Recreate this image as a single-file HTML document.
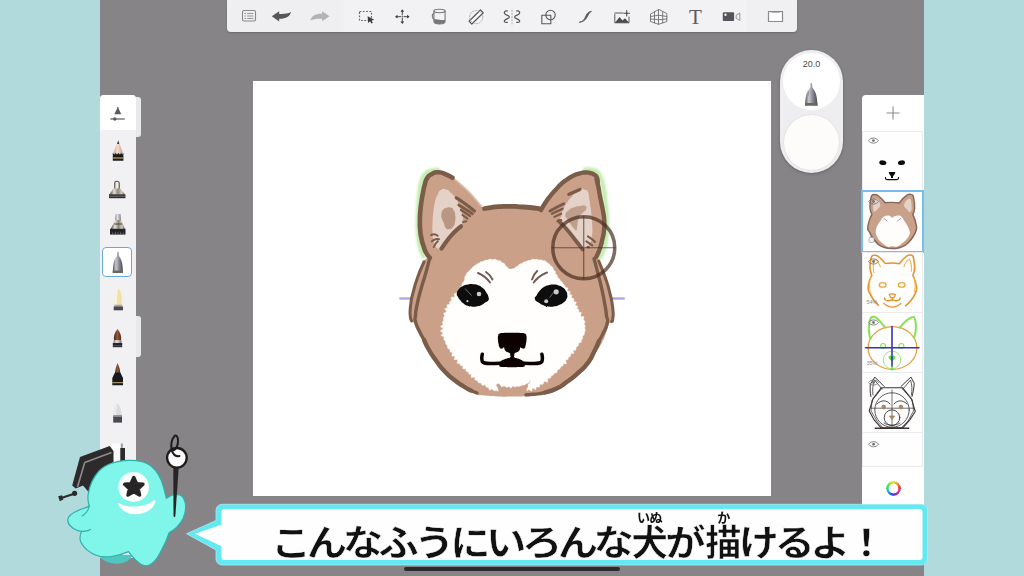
<!DOCTYPE html>
<html lang="ja">
<head>
<meta charset="utf-8">
<title>Sketch tutorial</title>
<style>
html,body{margin:0;padding:0;}
body{width:1024px;height:576px;overflow:hidden;background:#b0dadc;font-family:"Liberation Sans","Noto Sans CJK JP",sans-serif;}
#stage{position:relative;width:1024px;height:576px;overflow:hidden;background:#b0dadc;}
#app{position:absolute;left:100px;top:0;width:824px;height:576px;background:#868487;}
#canvas{position:absolute;left:253px;top:80.5px;width:518px;height:415px;background:#fff;}
#toolbar{position:absolute;left:227px;top:0;width:570px;height:32px;background:linear-gradient(90deg,#efeef0 0,#efeef0 116px,#f2f1f3 117px,#f2f1f3 519px,#f0eff1 520px);border-radius:0 0 4px 4px;box-shadow:0 1px 2px rgba(0,0,0,.22);}
#toolbar .seg{position:absolute;top:0;height:32px;background:#f6f5f7;}
#leftpanel{position:absolute;left:100px;top:95px;width:36px;height:463px;background:#f1f0f3;border-radius:4px 4px 0 0;}
#leftpanel .head{position:absolute;left:0;top:0;width:36px;height:35px;background:#fff;border-radius:4px 4px 0 0;}
.tab{position:absolute;left:136px;width:5px;background:#e9e8eb;border-radius:0 3px 3px 0;}
#sel{position:absolute;left:102px;top:246.500px;width:27.500px;height:28px;border:1.5px solid #6aa9e0;border-radius:4px;background:#fff;}
#rightpanel{position:absolute;left:862px;top:95px;width:62px;height:415px;background:#fff;border-radius:4px 0 0 0;}
.layer{position:absolute;left:863px;width:59px;background:#fefefe;box-shadow:0 0 0 1px #ebeaed;}
#pill{position:absolute;left:780px;top:50px;width:63px;height:123px;border-radius:32px;background:#eeedf0;box-shadow:0 1px 3px rgba(0,0,0,.25);}
#pill .c1{position:absolute;left:3px;top:3px;width:57px;height:57px;border-radius:50%;background:#fff;}
#pill .c2{position:absolute;left:4px;top:65px;width:55px;height:55px;border-radius:50%;background:#fdfcfb;box-shadow:0 0 2px rgba(0,0,0,.12);}
#pill .num{position:absolute;left:0;top:9px;width:63px;text-align:center;font-size:9px;line-height:11px;color:#4a494d;}
#caption{position:absolute;left:217px;top:505px;width:701px;height:53px;border:4px solid #62e3ee;border-radius:5px;background:#fff;box-shadow:0 0 0 1px #b6f3f7;}
#captext{-webkit-text-stroke:.5px #fefefe;position:absolute;left:271px;top:514px;font-size:36px;font-weight:700;color:#111;white-space:nowrap;line-height:60px;letter-spacing:-4.0px;transform:scaleX(1.12);transform-origin:0 0;}
.k{position:relative;display:inline-block;transform:scaleX(.9);letter-spacing:0;margin-right:-4.0px;}
.r{-webkit-text-stroke:0;position:absolute;left:50%;top:-3px;transform:translateX(-50%);font-size:13px;line-height:13px;letter-spacing:-0.5px;white-space:nowrap;}
#homebar{position:absolute;left:404px;top:567px;width:216px;height:4px;border-radius:2px;background:#2a2a2e;}
svg{position:absolute;left:0;top:0;}
#wheel{position:absolute;left:885.5px;top:480.8px;width:15px;height:15px;border-radius:50%;background:conic-gradient(#e8e12a,#f39a1e,#ea3030,#e02db0,#7a2be0,#2b4fe0,#2bb0e0,#2be07a,#8fe02b,#e8e12a);-webkit-mask:radial-gradient(circle,transparent 4.6px,#000 5.2px);mask:radial-gradient(circle,transparent 4.6px,#000 5.2px);}
</style>
</head>
<body>
<div id="stage">
  <div id="app"></div>
  <div id="canvas"></div>
  <div id="toolbar"></div>
  <div id="leftpanel"><div class="head"></div></div>
  <div class="tab" style="top:97px;height:40px"></div>
  <div class="tab" style="top:316px;height:41px"></div>
  <div id="sel"></div>
  <div id="rightpanel"></div>
  <div class="layer" style="top:132px;height:59px"></div>
  <div class="layer" style="top:192px;height:59px;box-shadow:0 0 0 2px #79bdec"></div>
  <div class="layer" style="top:253px;height:59px"></div>
  <div class="layer" style="top:313px;height:59px"></div>
  <div class="layer" style="top:373px;height:59px"></div>
  <div class="layer" style="top:433px;height:33px"></div>
  <div id="pill"><div class="c1"></div><div class="c2"></div><div class="num">20.0</div></div>
  <div id="homebar"></div>
  <div id="wheel"></div>
  <!--ART--><svg id="art" width="1024" height="576" viewBox="0 0 1024 576">
<defs>
  <linearGradient id="metal" x1="0" x2="1" y1="0" y2="0">
    <stop offset="0" stop-color="#3d3a38"/><stop offset=".3" stop-color="#e8e2d4"/><stop offset=".55" stop-color="#8d877c"/><stop offset=".8" stop-color="#d9d2c2"/><stop offset="1" stop-color="#3a3836"/>
  </linearGradient>
  <linearGradient id="silver" x1="0" x2="1" y1="0" y2="0">
    <stop offset="0" stop-color="#77757a"/><stop offset=".35" stop-color="#e6e5ea"/><stop offset=".7" stop-color="#b5b3ba"/><stop offset="1" stop-color="#6b696f"/>
  </linearGradient>
  <linearGradient id="steel" x1="0" x2="1" y1="0" y2="0">
    <stop offset="0" stop-color="#4e4d55"/><stop offset=".3" stop-color="#c9c9d2"/><stop offset=".6" stop-color="#8d8c96"/><stop offset="1" stop-color="#4a4950"/>
  </linearGradient>
  <linearGradient id="wood" x1="0" x2="1" y1="0" y2="0">
    <stop offset="0" stop-color="#c9a58e"/><stop offset=".45" stop-color="#f3dccc"/><stop offset="1" stop-color="#c39c86"/>
  </linearGradient>
  <linearGradient id="brushb" x1="0" x2="1" y1="0" y2="0">
    <stop offset="0" stop-color="#4f2c1c"/><stop offset=".5" stop-color="#94593b"/><stop offset="1" stop-color="#4a2a1b"/>
  </linearGradient>
</defs>
<g id="left-icons">
  <!-- header: brush tip + slider -->
  <path d="M117.800,107 L121.300,114.300 H114.300 Z" fill="#5a595e"/>
  <path d="M116.900,107.300 h1.800 v1.200 h-1.800 z" fill="#6a696e"/>
  <path d="M110.300,119 H124.700" stroke="#5a595e" stroke-width="1.200"/>
  <circle cx="114.800" cy="119" r="1.700" fill="#5a595e"/>
  <!-- pencil -->
  <path d="M118.200,140.300 L123.400,154 H112.800 Z" fill="url(#wood)"/>
  <path d="M118.200,140.300 L119.300,144 H117.100 Z" fill="#333"/>
  <path d="M112.800,153 L114.200,154.500 L115.600,153 L117,154.500 L118.400,153 L119.800,154.500 L121.200,153 L122.400,154.500 L123.400,153 V160.800 H112.800 Z" fill="#1d1b1c"/>
  <path d="M112.800,158 H123.400" stroke="#d9c58a" stroke-width="1"/>
  <!-- marker 1 -->
  <path d="M114.800,189.500 V182.800 C114.800,181.600 115.500,181.200 116.500,181.200 H117.500 C118.500,181.200 119.200,182 119.200,183.200 V189.500" fill="#efece6" stroke="#4f4b47" stroke-width="1.100"/>
  <path d="M113.300,188.500 H120.400 L124.800,194.600 H109.600 Z" fill="url(#metal)"/>
  <path d="M109,194.300 H125.400 V198.200 H109 Z" fill="#2b2a2c"/>
  <path d="M109.300,196.200 H125.100" stroke="#9a968f" stroke-width=".7"/>
  <!-- marker 2 -->
  <path d="M115.800,214 H120.400 L121,220.500 H115.200 Z" fill="url(#silver)"/>
  <path d="M115.200,220 H121 L125,229.200 H110.500 Z" fill="url(#metal)"/>
  <path d="M114,224 H122.300" stroke="#2b2a2c" stroke-width=".8"/>
  <path d="M110,228.800 H125.500 V234.600 H110 Z" fill="#252426"/>
  <path d="M112.500,234.700 v-2 M115.300,234.700 v-2.500 M118,234.700 v-2.500 M120.700,234.700 v-2.500 M123.300,234.700 v-2" stroke="#807e84" stroke-width=".8"/>
  <!-- selected: bullet tip -->
  <path d="M117.300,251.800 H118.500 L118.900,256 C120.300,258 121.500,260 122,262.500 C122.600,265.500 122.900,269 123,272.900 H112.800 C112.900,269 113.200,265.500 113.800,262.500 C114.300,260 115.500,258 116.900,256 Z" fill="url(#steel)"/>
  <path d="M112.800,270.600 H123 V273 H112.800 Z" fill="#6b6458"/>
  <!-- fountain nib -->
  <path d="M118.600,288.300 C121.800,293 122.600,299 121.200,305.500 H115 C114.200,299 115,293 118.600,288.300 Z" fill="#f1dfa6"/>
  <path d="M118.600,288.300 C117,293 116.800,299 117.200,305.500 H115 C114.200,299 115,293 118.600,288.300 Z" fill="#fbf4dc"/>
  <path d="M114.300,304.700 H122.300 V306.800 H114.300 Z" fill="#a9a7ac"/>
  <path d="M113.700,306.500 H123 V310.300 H113.700 Z" fill="#4a494d"/>
  <!-- brown brush -->
  <path d="M117.500,329 C120.500,332.500 121.800,337 121,340.500 H114 C113.200,337 114.500,332.500 117.500,329 Z" fill="url(#brushb)"/>
  <path d="M113.600,340.300 H121.500 V343.300 H113.600 Z" fill="url(#silver)"/>
  <path d="M112.800,343 H122.200 V347.200 H112.800 Z" fill="#262527"/>
  <path d="M113,345.800 H122" stroke="#77757a" stroke-width=".6"/>
  <!-- dark brush -->
  <path d="M117.600,363 C119.300,366.500 120.200,370 120.300,373.500 H115 C115.100,370 116,366.500 117.600,363 Z" fill="url(#brushb)"/>
  <path d="M115,372.500 H120.300 L123,378 V385.300 H112.300 V378 Z" fill="#19181a"/>
  <path d="M112.300,382.700 H123" stroke="#d5c28a" stroke-width=".9"/>
  <!-- eraser-ish -->
  <path d="M117.500,403 C120.300,406.500 121.800,411 122,416.500 H113.200 C113.300,411 114.700,406.500 117.500,403 Z" fill="#dcdcde"/>
  <path d="M117.500,403 C116.500,406.500 116.300,411 116.500,416.500 H113.200 C113.300,411 114.700,406.500 117.500,403 Z" fill="#ebebed"/>
  <path d="M113.200,415.500 H122 V422.600 H113.200 Z" fill="#4a494d"/>
  <path d="M113.200,416.500 H122" stroke="#8b898f" stroke-width="1"/>
  <!-- last, partly hidden -->
  <path d="M112,443.500 H121 V450 H112 Z" fill="#fbfbfc"/>
  <path d="M120.800,443.500 H122.800 V449 H120.800 Z" fill="#a09ea4"/>
  <path d="M120.300,448 H125 V462 H120.300 Z" fill="#2b2a2c"/>
  <path d="M112.500,451 H119.500 M113.500,453.500 H119.500 M112.500,456 H119.500 M113.500,458.500 H119.500" stroke="#fdfdfd" stroke-width="1.600"/>
</g>

<g id="right-icons">
  <path d="M893,106.500 V119.500 M886.500,113 H899.500" stroke="#8b8a8e" stroke-width="1.100" fill="none"/>
  <!-- layer1 : face features -->
  <g transform="translate(873.40 140.60)"><path d="M-5,0 C-2.500,-3.400 2.500,-3.400 5,0 C2.500,3.400 -2.500,3.400 -5,0 Z" fill="none" stroke="#77767a" stroke-width=".9"/><circle r="1.400" fill="#77767a"/></g>
  <ellipse cx="882.800" cy="162.700" rx="3.600" ry="2.300" fill="#0c0b0b" transform="rotate(8 882.800 162.700)"/>
  <ellipse cx="901.500" cy="162.700" rx="3.600" ry="2.300" fill="#0c0b0b" transform="rotate(-8 901.500 162.700)"/>
  <path d="M888.800,172 H895.300 C895.500,174 893.500,175 893,176.500 V178 H891 V176.500 C890.500,175 888.600,174 888.800,172 Z" fill="#0c0b0b"/>
  <path d="M885.500,177 C885.300,179 886,179.600 888,179.600 H896 C898,179.600 898.700,179 898.500,177" fill="none" stroke="#0c0b0b" stroke-width="1.100"/>
  <!-- layer2 : colored dog -->
  <g transform="translate(892.200 221.300) scale(.242) translate(-511.500 -284)">
    <path d="M410,315.600 C410,305 413,292 418,277 C421,268 424,262 427.500,257 C423,247 420,235 419.600,225 C420,205 422,190 427,177.500 C432,172 445,172 452.500,177.500 C465,187 475,198 483,207.300 C500,205.500 525,205.500 540.500,208.500 C550,196 562,183 574,175 C582,171 596,172 598.300,178.750 C602,195 605,215 604.200,230 C603,242 600,250 597,256.500 C604,270 610,292 612.700,307.800 C613,318 610,324 606,333 C598,350 585,368 566.700,382 C550,392 530,396.500 512,396.600 C490,396.500 470,392 454,379.500 C440,367 425,346 417,327 C412,322 410,318 410,315.600 Z" fill="#c9a08a" stroke="#86675a" stroke-width="6" stroke-linejoin="round"/>
    <path d="M441,190 C446,189 451,192 456,199 C460,206 462,214 462.500,221 C459,227 452,233 444,241 L436,246 C433,238 432,226 433,214 C434,203 436.500,195 441,190 Z" fill="#e4d2c7"/>
    <path d="M581,189.500 C585,190 588,191.500 589,196 C591,208 592.500,222 591.500,236 L588,243 C584,247 581,246 579,243 C574,236 566,228 560,222 C561,212 565,204 570,198.500 C574,194 577,191 581,189.500 Z" fill="#e4d2c7"/>
    <path d="M464,281 C470,266 485,258 498,260.500 C504,263 508,269.500 512,269 C518,264 530,258 545,261.500 C554,266 558,280 564.500,286 C573,299 584,320 585,330 C584,345 566,366 556,372 C545,382 536,388 527.500,390.500 C520,386 505,386 498,391 C484,386.500 465,370 456,360 C446,345 441,332 444,318 C448,303 456,291 464,281 Z" fill="#fffdfc"/>
    <path d="M478,273 C483,275 487,278.500 490,282.500 M533.700,282.500 C537,278 542,274.500 547,272.500" fill="none" stroke="#8a8090" stroke-width="3.500" stroke-linecap="round"/>
  </g>
  <g transform="translate(873.50 201.50)"><path d="M-5,0 C-2.500,-3.400 2.500,-3.400 5,0 C2.500,3.400 -2.500,3.400 -5,0 Z" fill="none" stroke="#77767a" stroke-width=".9"/><circle r="1.400" fill="#77767a"/></g>
  <rect x="869" y="237.500" width="5" height="5" rx="1" fill="#f1f0f2" stroke="#9a989e" stroke-width=".6"/>
  <path d="M870.300,237.500 v-1.300 a1.200,1.200 0 0 1 2.400,0 v1.300" fill="none" stroke="#9a989e" stroke-width=".6"/>
  <!-- layer3 : orange outline dog -->
  <g transform="translate(892.200 282) scale(.242) translate(-511.500 -284)" fill="none" stroke="#e8922c" stroke-width="6.500" stroke-linecap="round" stroke-linejoin="round">
    <path d="M427.500,257 C423,247 420,235 419.600,225 C420,205 422,190 427,177.500 C432,172 445,172 452.500,177.500 C465,187 475,198 483,207.300 C500,205.500 525,205.500 540.500,208.500 C550,196 562,183 574,175 C582,171 596,172 598.300,178.750 C602,195 605,215 604.200,230 C603,242 600,250 597,256.500 C604,270 610,292 612.700,307.800 C613,318 610,324 606,333 C598,350 585,368 566.700,382 M454,379.500 C440,367 425,346 417,327 C409,318 411,300 418,277 C421,268 424,262 427.500,257"/>
    <path d="M436,246 C432,226 433,203 441,190 C450,195 458,208 462.500,221 M560,222 C563,208 572,195 583,189.500 C591,205 592,225 590,240" stroke="#f0b64c" stroke-width="4.500"/>
    <path d="M424,262 C417,280 415,305 421,325 M601,262 C607,280 609,305 603,325" stroke="#f0b64c" stroke-width="4"/>
    <path d="M476,372 C490,384 505,388 512,388 C520,388 535,384 548,372" stroke-width="5"/>
    <ellipse cx="472" cy="296" rx="14" ry="9.500" stroke="#eba93c" stroke-width="5.500"/>
    <ellipse cx="551" cy="296" rx="14" ry="9.500" stroke="#eba93c" stroke-width="5.500"/>
    <path d="M500,336 C505,332 519,332 524,336 C524,344 518,350 512,350 C506,350 500,344 500,336 Z M512,350 V358" stroke-width="5.500"/>
    <path d="M480,350 C480,362 495,364 512,358 C529,364 544,362 544,350" stroke-width="5.500"/>
  </g>
  <g transform="translate(873.50 261.50)"><path d="M-5,0 C-2.500,-3.400 2.500,-3.400 5,0 C2.500,3.400 -2.500,3.400 -5,0 Z" fill="none" stroke="#77767a" stroke-width=".9"/><circle r="1.400" fill="#77767a"/></g>
  <!-- layer4 : construction -->
  <g fill="none" stroke-linecap="round" stroke-linejoin="round">
    <ellipse cx="892.500" cy="348" rx="24.400" ry="21.400" stroke="#e9a03e" stroke-width="1.300"/>
    <path d="M870.300,338.800 C868.800,333 868.600,328 869.200,324.300 C869.800,320 870.500,317.500 872,317 C873.500,316.500 875,317 876.400,317.700 C879.500,320.500 882.500,324 885.300,327.700 M899.800,327.700 C902.600,324 905.600,320.500 910.900,317.700 C912,317 913,316.700 913.700,317 C915,317.800 915.500,320.500 915.900,324.300 C916.300,329 915.700,333.500 914.200,337.700" stroke="#86e24e" stroke-width="2"/>
    <circle cx="883.100" cy="346" r="2.500" stroke="#8fe25e" stroke-width="1.100"/><circle cx="901.400" cy="346" r="2.500" stroke="#8fe25e" stroke-width="1.100"/>
    <circle cx="892" cy="360" r="8.800" stroke="#9be272" stroke-width=".9"/>
    <path d="M889.200,356.600 C890,355.600 891.300,355.800 892,356.900 C892.700,355.800 894,355.600 894.800,356.600 C895.500,358 893.500,360 892,361.300 C890.500,360 888.500,358 889.200,356.600 Z" fill="#55dd3a" stroke="#55dd3a" stroke-width=".8"/>
    <path d="M892,326.500 V366.500 M865.500,347.700 H919" stroke="#3536b4" stroke-width="1.600"/>
    <path d="M892,366.500 V370" stroke="#55dd3a" stroke-width="1.300"/>
  </g>
  <g transform="translate(873.50 322.50)"><path d="M-5,0 C-2.500,-3.400 2.500,-3.400 5,0 C2.500,3.400 -2.500,3.400 -5,0 Z" fill="none" stroke="#77767a" stroke-width=".9"/><circle r="1.400" fill="#77767a"/></g>
  <!-- layer5 : black sketch -->
  <g fill="none" stroke="#3a3433" stroke-width="1" stroke-linecap="round" stroke-linejoin="round">
    <path d="M870.900,396.500 C870,392 870,388 870.300,384.300 L874.800,377.100 L884.200,386.500 M900.900,386.500 L910.900,377.100 L914.200,383.200 C914,388 913.200,392.500 912,396.500"/>
    <path d="M873,395 C872.300,390 872.600,385 874.500,380 L882,389 M903,389 L910.500,380 C912.200,385 912.300,390 911.400,395" stroke-width=".8"/>
    <path d="M881.400,387.700 H902.500 L911.400,398.800 L915.300,411.500 L909.800,419.900 L903,427.700 H880.900 L874.200,419.900 L869.200,411 L873,398.800 Z" stroke-width="1.100"/>
    <path d="M882,388.500 L872,400 L871,411 L877,421 L883,428 M902,388.500 L912.500,400 L913.500,411 L908,421 L901,428" stroke-width=".7"/>
    <circle cx="892" cy="410" r="17.200" stroke-width=".8"/>
    <circle cx="892" cy="417.700" r="7.800" stroke-width=".9"/>
    <path d="M892,390 V426.500 M871,408.200 H914.200" stroke-width=".7"/>
    <path d="M877,404 C881,399.500 887,400 890,404 M894,404 C897,400 903,399.500 907,404" stroke-width=".9"/>
    <path d="M875.300,428.200 H908.700" stroke-width="1.500"/>
    <path d="M884,423 C888,426 896,426 900,423" stroke-width=".8"/>
  </g>
  <circle cx="883.700" cy="407.100" r="2.300" fill="#a98868"/><circle cx="900.900" cy="407.100" r="2.300" fill="#a98868"/>
  <path d="M889.300,416 H894.700 L892,419.700 Z" fill="#a98868" stroke="#a98868" stroke-width=".8" stroke-linejoin="round"/>
  <g transform="translate(873.50 382.50)"><path d="M-5,0 C-2.500,-3.400 2.500,-3.400 5,0 C2.500,3.400 -2.500,3.400 -5,0 Z" fill="none" stroke="#77767a" stroke-width=".9"/><circle r="1.400" fill="#77767a"/></g>
  <!-- layer6 eye -->
  <g transform="translate(873.60 444.20)"><path d="M-5,0 C-2.500,-3.400 2.500,-3.400 5,0 C2.500,3.400 -2.500,3.400 -5,0 Z" fill="none" stroke="#77767a" stroke-width=".9"/><circle r="1.400" fill="#77767a"/></g>
  <!-- percent labels -->
  <text x="866.500" y="304" font-family="'Liberation Sans',sans-serif" font-size="5.500" fill="#8a898d">54%</text>
  <text x="866.500" y="364.500" font-family="'Liberation Sans',sans-serif" font-size="5.500" fill="#8a898d">35%</text>
</g>

<defs><filter id="gblur" x="-20%" y="-20%" width="140%" height="140%"><feGaussianBlur stdDeviation=".8"/></filter><filter id="soft" x="-5%" y="-5%" width="110%" height="110%"><feGaussianBlur stdDeviation=".45"/></filter></defs>
<g id="dog" filter="url(#soft)">
<g fill="none" stroke="#c2edad" stroke-width="4.600" stroke-linecap="round" filter="url(#gblur)"><path d="M438.00,170.00 C435.67,170.33 435.23,169.57 431.00,171.00 C426.77,172.43 428.37,170.97 425.30,174.30 C422.23,177.63 423.63,175.43 421.80,181.00 C419.97,186.57 420.87,183.00 419.80,191.00 C418.73,199.00 419.20,195.33 418.60,205.00 C418.00,214.67 418.13,211.00 418.00,220.00 C417.87,229.00 417.53,223.33 418.20,232.00 C418.87,240.67 418.23,238.00 420.00,246.00 C421.77,254.00 422.33,252.67 423.50,256.00"/><path d="M585.00,169.80 C587.33,169.87 587.83,169.10 592.00,170.00 C596.17,170.90 594.67,169.83 597.50,172.50 C600.33,175.17 598.57,173.17 600.50,178.00 C602.43,182.83 601.67,178.67 603.30,187.00 C604.93,195.33 604.23,191.67 605.40,203.00 C606.57,214.33 606.60,209.33 606.80,221.00 C607.00,232.67 607.17,228.33 606.00,238.00 C604.83,247.67 605.47,243.33 603.30,250.00 C601.13,256.67 600.77,255.33 599.50,258.00"/></g>
<path d="M400.3,298.5 H411 M612.5,298.5 H623.8" stroke="#aeabe6" stroke-width="2.4" stroke-linecap="round" fill="none"/>
<path d="M410.00,315.60 C409.83,310.50 409.43,312.50 410.50,304.70 C411.57,296.90 410.73,301.57 413.20,292.20 C415.67,282.83 414.27,286.77 417.90,276.60 C421.53,266.43 420.90,268.23 424.10,261.70 C427.30,255.17 427.53,260.90 427.50,257.00 C427.47,253.10 426.10,256.08 424.00,250.00 C421.90,243.92 422.67,247.08 421.20,238.75 C419.73,230.42 420.00,234.58 419.60,225.00 C419.20,215.42 419.43,218.33 420.00,210.00 C420.57,201.67 420.30,206.33 421.30,200.00 C422.30,193.67 421.93,196.33 423.00,191.00 C424.07,185.67 423.20,188.50 424.50,184.00 C425.80,179.50 424.73,180.83 426.90,177.50 C429.07,174.17 427.47,175.87 431.00,174.00 C434.53,172.13 432.83,172.07 437.50,171.90 C442.17,171.73 440.00,171.63 445.00,173.50 C450.00,175.37 446.83,173.67 452.50,177.50 C458.17,181.33 456.17,180.00 462.00,185.00 C467.83,190.00 465.33,187.67 470.00,192.50 C474.67,197.33 471.67,194.57 476.00,199.50 C480.33,204.43 477.67,204.97 483.00,207.30 C488.33,209.63 486.33,207.00 492.00,206.50 C497.67,206.00 494.00,206.13 500.00,205.80 C506.00,205.47 503.33,205.43 510.00,205.50 C516.67,205.57 513.33,205.57 520.00,206.00 C526.67,206.43 523.17,205.97 530.00,206.80 C536.83,207.63 535.50,209.93 540.50,208.50 C545.50,207.07 541.83,206.67 545.00,202.50 C548.17,198.33 546.50,200.33 550.00,196.00 C553.50,191.67 551.83,193.58 555.50,189.50 C559.17,185.42 557.17,187.25 561.00,183.75 C564.83,180.25 562.75,181.92 567.00,179.00 C571.25,176.08 569.42,177.07 573.75,175.00 C578.08,172.93 576.25,173.83 580.00,172.80 C583.75,171.77 581.67,171.97 585.00,171.90 C588.33,171.83 586.67,171.77 590.00,172.60 C593.33,173.43 592.23,172.35 595.00,174.40 C597.77,176.45 597.13,174.88 598.30,178.75 C599.47,182.62 597.93,180.58 598.50,186.00 C599.07,191.42 598.97,189.33 600.00,195.00 C601.03,200.67 600.60,198.00 601.60,203.00 C602.60,208.00 602.03,204.33 603.00,210.00 C603.97,215.67 604.10,213.33 604.50,220.00 C604.90,226.67 604.80,223.75 604.20,230.00 C603.60,236.25 604.10,232.50 602.70,238.75 C601.30,245.00 601.90,242.83 600.00,248.75 C598.10,254.67 597.17,252.42 597.00,256.50 C596.83,260.58 596.87,254.30 599.50,261.00 C602.13,267.70 601.53,266.20 604.90,276.60 C608.27,287.00 607.00,281.80 609.60,292.20 C612.20,302.60 611.60,299.87 612.70,307.80 C613.80,315.73 613.27,311.43 612.90,316.00 C612.53,320.57 613.07,318.50 611.60,321.50 C610.13,324.50 610.37,321.17 608.50,325.00 C606.63,328.83 608.17,327.17 606.00,333.00 C603.83,338.83 605.67,335.67 602.00,342.50 C598.33,349.33 599.83,346.57 595.00,353.50 C590.17,360.43 593.17,356.80 587.50,363.30 C581.83,369.80 584.93,366.77 578.00,373.00 C571.07,379.23 573.80,376.73 566.70,382.00 C559.60,387.27 563.93,385.13 556.70,388.80 C549.47,392.47 552.23,390.83 545.00,393.00 C537.77,395.17 541.67,394.20 535.00,395.30 C528.33,396.40 532.67,395.87 525.00,396.30 C517.33,396.73 521.00,396.57 512.00,396.60 C503.00,396.63 507.00,396.73 498.00,396.40 C489.00,396.07 492.67,396.53 485.00,395.60 C477.33,394.67 482.08,396.63 475.00,393.60 C467.92,390.57 470.75,391.20 463.75,386.50 C456.75,381.80 460.25,384.43 454.00,379.50 C447.75,374.57 451.33,378.20 445.00,371.70 C438.67,365.20 441.25,368.33 435.00,360.00 C428.75,351.67 430.92,354.70 426.25,346.70 C421.58,338.70 424.08,342.57 421.00,336.00 C417.92,329.43 419.50,331.50 417.00,327.00 C414.50,322.50 415.50,324.83 413.50,322.50 C411.50,320.17 412.17,322.30 411.00,320.00 C409.83,317.70 410.17,320.70 410.00,315.60 Z" fill="#cba088"/>
<path d="M455.00,179.50 C457.33,181.53 457.00,181.10 462.00,185.60 C467.00,190.10 465.33,188.20 470.00,193.00 C474.67,197.80 472.17,195.60 476.00,200.00 C479.83,204.40 479.67,204.13 481.50,206.20" fill="none" stroke="#dbbda9" stroke-width="1.6" stroke-linecap="round"/>
<path d="M441.00,190.00 C443.83,188.20 442.83,188.77 446.00,189.60 C449.17,190.43 447.17,189.37 450.50,192.50 C453.83,195.63 452.83,194.00 456.00,199.00 C459.17,204.00 458.00,202.50 460.00,207.50 C462.00,212.50 461.13,209.67 462.00,214.00 C462.87,218.33 463.43,216.33 462.60,220.50 C461.77,224.67 462.45,223.00 459.50,226.50 C456.55,230.00 457.92,227.17 453.75,231.00 C449.58,234.83 451.25,232.83 447.00,238.00 C442.75,243.17 444.50,243.33 441.00,246.50 C437.50,249.67 439.00,249.67 436.50,247.50 C434.00,245.33 434.83,245.17 433.50,240.00 C432.17,234.83 432.80,238.00 432.50,232.00 C432.20,226.00 432.30,228.67 432.60,222.00 C432.90,215.33 432.60,218.67 433.40,212.00 C434.20,205.33 433.63,207.67 435.00,202.00 C436.37,196.33 435.50,199.00 437.50,195.00 C439.50,191.00 438.17,191.80 441.00,190.00 Z" fill="#e4d2c8"/>
<path d="M446.00,208.00 C448.50,207.20 447.90,206.77 450.50,207.60 C453.10,208.43 452.20,207.70 453.80,210.50 C455.40,213.30 454.90,212.17 455.30,216.00 C455.70,219.83 455.77,218.33 455.00,222.00 C454.23,225.67 455.00,224.60 453.00,227.00 C451.00,229.40 451.50,229.03 449.00,229.20 C446.50,229.37 447.23,229.57 445.50,227.50 C443.77,225.43 444.97,225.83 443.80,223.00 C442.63,220.17 442.77,222.00 442.00,219.00 C441.23,216.00 441.17,217.00 441.50,214.00 C441.83,211.00 441.50,212.00 443.00,210.00 C444.50,208.00 443.50,208.80 446.00,208.00 Z" fill="#b99783"/>
<path d="M581.00,189.20 C584.00,188.30 582.67,188.87 585.00,189.80 C587.33,190.73 586.60,189.27 588.00,192.00 C589.40,194.73 588.37,193.00 589.20,198.00 C590.03,203.00 589.70,201.00 590.50,207.00 C591.30,213.00 591.00,209.67 591.60,216.00 C592.20,222.33 592.17,219.33 592.30,226.00 C592.43,232.67 592.77,230.33 592.00,236.00 C591.23,241.67 592.00,239.40 590.00,243.00 C588.00,246.60 588.50,245.30 586.00,246.80 C583.50,248.30 584.83,248.60 582.50,247.50 C580.17,246.40 581.83,247.00 579.00,243.50 C576.17,240.00 577.83,241.83 574.00,237.00 C570.17,232.17 571.83,234.00 567.50,229.00 C563.17,224.00 563.00,226.67 561.00,222.00 C559.00,217.33 560.50,219.67 561.50,215.00 C562.50,210.33 562.00,212.33 564.00,208.00 C566.00,203.67 565.00,205.67 567.50,202.00 C570.00,198.33 568.67,200.17 571.50,197.00 C574.33,193.83 572.83,195.10 576.00,192.50 C579.17,189.90 578.00,190.10 581.00,189.20 Z" fill="#e4d2c8"/>
<path d="M565.50,214.50 C566.00,211.33 566.17,212.40 569.00,210.00 C571.83,207.60 570.33,208.63 574.00,207.30 C577.67,205.97 576.23,206.50 580.00,206.00 C583.77,205.50 583.30,204.63 585.30,205.80 C587.30,206.97 586.77,207.27 586.00,209.50 C585.23,211.73 585.00,210.33 583.00,212.50 C581.00,214.67 581.67,213.17 580.00,216.00 C578.33,218.83 578.90,217.67 578.00,221.00 C577.10,224.33 577.80,223.00 577.30,226.00 C576.80,229.00 577.60,229.17 576.50,230.00 C575.40,230.83 576.00,230.50 574.00,228.50 C572.00,226.50 572.67,227.00 570.50,224.00 C568.33,221.00 569.17,222.67 567.50,219.50 C565.83,216.33 565.00,217.67 565.50,214.50 Z" fill="#bf9f8b"/>
<path d="M463.53,281.90 L464.68,279.66 L464.76,277.07 L466.07,275.04 L466.92,272.91 L468.76,271.59 L469.90,269.91 L471.90,268.26 L473.42,266.40 L475.35,265.26 L477.43,263.63 L479.17,263.00 L480.91,261.75 L483.17,261.51 L484.96,260.35 L487.60,260.01 L490.10,259.09 L492.49,259.82 L495.44,259.28 L497.94,260.66 L500.33,260.77 L501.97,262.65 L504.14,263.26 L505.42,265.51 L507.11,266.89 L508.68,268.66 L510.49,269.37 L514.15,268.62 L515.74,266.88 L518.13,265.70 L519.54,264.06 L521.81,263.49 L523.85,261.95 L526.02,261.60 L528.18,260.61 L530.49,260.17 L532.43,259.13 L534.84,259.59 L536.97,259.30 L538.96,260.04 L541.17,259.84 L543.13,260.77 L545.23,260.73 L547.00,262.63 L549.13,263.65 L550.68,265.72 L552.79,267.28 L553.43,269.67 L555.27,271.28 L555.48,273.55 L557.14,275.14 L557.78,277.52 L559.73,279.31 L560.48,281.04 L562.16,282.08 L563.34,284.12 L564.56,285.34 L565.22,287.16 L567.86,287.96 L567.03,290.96 L570.32,291.55 L569.40,294.35 L572.00,295.13 L571.27,298.00 L573.95,298.85 L573.53,301.51 L576.53,302.16 L574.87,305.31 L577.69,306.09 L577.01,308.64 L578.93,309.84 L578.64,312.07 L581.35,312.70 L580.28,316.16 L584.08,316.82 L583.28,319.81 L585.16,321.48 L584.06,323.95 L585.43,325.95 L584.54,328.04 L585.48,330.05 L584.43,332.23 L584.47,334.48 L582.43,336.14 L582.91,338.45 L581.27,339.92 L581.24,342.30 L578.59,343.00 L578.44,345.82 L576.23,347.09 L575.86,350.18 L572.98,350.28 L573.96,353.60 L570.48,353.54 L570.52,356.26 L568.35,357.19 L568.09,359.57 L565.37,360.06 L566.61,363.63 L563.53,363.75 L562.87,365.73 L560.69,366.87 L559.77,369.08 L557.41,369.78 L557.06,372.55 L554.42,372.95 L553.32,374.98 L551.17,375.78 L550.50,378.07 L547.69,378.60 L547.61,382.18 L544.00,381.33 L543.10,384.26 L540.08,384.16 L539.19,387.18 L536.52,386.83 L535.61,389.64 L532.62,387.82 L531.63,391.28 L528.63,389.41 L526.94,391.08 L526.83,388.77 L528.40,386.63 L527.95,384.41 L529.84,383.19 L530.64,380.79 L531.26,380.01 L530.25,380.37 L528.94,382.87 L526.48,383.38 L524.54,385.03 L521.74,385.29 L519.08,386.61 L516.98,386.08 L515.06,387.13 L512.96,385.80 L510.95,388.14 L508.95,386.56 L506.95,387.29 L504.32,386.03 L501.58,386.68 L499.18,383.81 L496.13,382.74 L498.03,382.81 L495.87,385.08 L497.77,387.90 L498.29,391.11 L496.47,390.57 L493.96,390.78 L492.13,388.96 L489.53,390.20 L488.51,387.58 L486.22,387.12 L485.29,384.74 L482.20,385.48 L481.00,383.09 L478.35,382.87 L477.43,380.49 L474.96,380.07 L474.84,376.88 L471.10,377.64 L471.43,374.39 L468.99,374.13 L468.22,371.98 L466.10,371.26 L465.67,368.83 L462.84,368.81 L462.91,365.96 L460.33,365.61 L459.79,363.45 L457.00,363.26 L457.87,359.61 L454.08,359.63 L455.06,356.21 L451.61,355.97 L452.52,352.71 L450.12,351.76 L449.97,349.38 L447.76,348.38 L447.32,345.69 L445.65,343.81 L445.35,341.36 L443.62,339.53 L444.33,336.95 L441.01,335.46 L443.09,332.88 L440.26,331.12 L443.48,328.53 L440.31,326.45 L443.04,324.65 L442.39,322.30 L443.67,320.23 L443.30,317.88 L444.63,315.92 L443.73,313.29 L446.67,311.79 L444.64,308.79 L447.53,307.72 L446.77,304.88 L449.77,304.22 L449.61,301.87 L451.66,300.95 L450.91,297.31 L454.71,297.13 L454.16,293.71 L457.26,292.92 L457.72,290.30 L460.31,289.04 L460.40,286.77 L462.03,285.50 L462.20,283.29 Z" fill="#fffefd" stroke="#fffefd" stroke-width=".4" stroke-linejoin="round"/>
<g fill="none" stroke="#7a5c4a" stroke-linecap="round" stroke-linejoin="round">
<path d="M452.50,177.80 C450.00,176.53 450.00,175.87 445.00,174.00 C440.00,172.13 442.00,172.10 437.50,172.20 C433.00,172.30 434.93,172.37 431.50,174.30 C428.07,176.23 429.43,174.60 427.20,178.00 C424.97,181.40 426.13,180.00 424.80,184.50 C423.47,189.00 424.27,186.17 423.20,191.50 C422.13,196.83 422.53,194.17 421.60,200.50 C420.67,206.83 420.97,203.67 420.40,210.50 C419.83,217.33 419.97,214.50 419.90,221.00 C419.83,227.50 419.67,224.08 420.20,230.00 C420.73,235.92 420.40,233.42 421.50,238.75 C422.60,244.08 422.00,241.42 423.50,246.00 C425.00,250.58 423.90,248.57 426.00,252.50 C428.10,256.43 428.53,256.03 429.80,257.80" stroke-width="4.6"/>
<path d="M484.50,208.60 C487.00,208.20 486.83,208.07 492.00,207.40 C497.17,206.73 494.00,206.97 500.00,206.60 C506.00,206.23 503.33,206.23 510.00,206.30 C516.67,206.37 513.33,206.40 520.00,206.80 C526.67,207.20 523.33,206.83 530.00,207.50 C536.67,208.17 536.67,208.37 540.00,208.80" stroke-width="4.8"/>
<path d="M541.00,210.00 C542.33,207.77 542.00,207.87 545.00,203.30 C548.00,198.73 546.50,200.73 550.00,196.30 C553.50,191.87 551.83,194.03 555.50,190.00 C559.17,185.97 557.17,187.70 561.00,184.20 C564.83,180.70 562.75,182.37 567.00,179.50 C571.25,176.63 569.42,177.63 573.75,175.60 C578.08,173.57 576.25,174.43 580.00,173.40 C583.75,172.37 581.67,172.63 585.00,172.50 C588.33,172.37 586.83,172.23 590.00,173.00 C593.17,173.77 592.07,172.97 594.50,174.80 C596.93,176.63 596.27,175.77 597.30,178.50 C598.33,181.23 597.50,181.50 597.60,183.00" stroke-width="4.4"/>
<path d="M596.50,179.00 C597.07,181.33 597.10,180.67 598.20,186.00 C599.30,191.33 598.73,189.33 599.80,195.00 C600.87,200.67 600.40,198.00 601.40,203.00 C602.40,208.00 601.87,204.33 602.80,210.00 C603.73,215.67 603.80,213.33 604.20,220.00 C604.60,226.67 604.57,223.75 604.00,230.00 C603.43,236.25 603.90,232.50 602.50,238.75 C601.10,245.00 601.87,242.67 599.80,248.75 C597.73,254.83 597.47,254.25 596.30,257.00" stroke-width="4.4"/>
<path d="M424.10,261.70 C422.03,266.67 421.53,266.43 417.90,276.60 C414.27,286.77 415.60,282.83 413.20,292.20 C410.80,301.57 411.70,296.90 410.70,304.70 C409.70,312.50 409.90,310.17 410.20,315.60 C410.50,321.03 411.13,319.20 411.60,321.00" stroke-width="3"/>
<path d="M429.60,258.60 C428.30,263.53 428.57,263.27 425.70,273.40 C422.83,283.53 423.87,278.57 421.00,289.00 C418.13,299.43 418.93,295.83 417.10,304.70 C415.27,313.57 416.00,309.83 415.50,315.60 C415.00,321.37 414.30,316.78 415.60,322.00 C416.90,327.22 416.57,325.25 419.40,331.25 C422.23,337.25 421.07,334.08 424.10,340.00 C427.13,345.92 424.53,342.17 428.50,349.00 C432.47,355.83 430.50,352.93 436.00,360.50 C441.50,368.07 439.00,365.27 445.00,371.70 C451.00,378.13 447.75,374.87 454.00,379.80 C460.25,384.73 458.08,382.93 463.75,386.50 C469.42,390.07 466.58,388.33 471.00,390.50 C475.42,392.67 475.00,392.17 477.00,393.00" stroke-width="3.4"/>
<path d="M424.10,340.00 C425.57,343.00 424.53,342.17 428.50,349.00 C432.47,355.83 430.50,352.93 436.00,360.50 C441.50,368.07 439.00,365.27 445.00,371.70 C451.00,378.13 447.75,374.87 454.00,379.80 C460.25,384.73 458.08,382.93 463.75,386.50 C469.42,390.07 468.58,389.17 471.00,390.50" stroke-width="4.4"/>
<path d="M599.00,341.00 C597.33,344.67 597.83,344.57 594.00,352.00 C590.17,359.43 592.83,356.30 587.50,363.30 C582.17,370.30 584.93,366.77 578.00,373.00 C571.07,379.23 573.80,376.83 566.70,382.00 C559.60,387.17 563.93,385.00 556.70,388.50 C549.47,392.00 548.90,391.17 545.00,392.50" stroke-width="4.4"/>
<path d="M594.00,258.60 C595.30,263.53 595.30,263.27 597.90,273.40 C600.50,283.53 599.47,278.57 601.80,289.00 C604.13,299.43 603.33,295.83 604.90,304.70 C606.47,313.57 605.73,309.37 606.50,315.60 C607.27,321.83 608.50,317.13 607.20,323.40 C605.90,329.67 605.33,328.53 602.60,334.40 C599.87,340.27 601.87,335.13 599.00,341.00 C596.13,346.87 597.83,344.57 594.00,352.00 C590.17,359.43 592.83,356.30 587.50,363.30 C582.17,370.30 584.93,366.77 578.00,373.00 C571.07,379.23 573.80,376.83 566.70,382.00 C559.60,387.17 563.93,385.00 556.70,388.50 C549.47,392.00 552.57,390.57 545.00,392.50 C537.43,394.43 540.33,393.53 534.00,394.30 C527.67,395.07 528.67,394.63 526.00,394.80" stroke-width="3.4"/>
<path d="M598.70,261.00 C600.77,266.20 601.27,266.20 604.90,276.60 C608.53,287.00 607.00,281.80 609.60,292.20 C612.20,302.60 611.63,299.03 612.70,307.80 C613.77,316.57 613.17,313.93 612.80,318.50 C612.43,323.07 612.00,320.50 611.60,321.50" stroke-width="3"/>
<path d="M456.30,197.80 C458.20,199.03 457.93,198.67 462.00,201.50 C466.07,204.33 464.37,203.13 468.50,206.30 C472.63,209.47 472.43,209.43 474.40,211.00" stroke-width="3.2"/>
<path d="M458.8,205 C463.500,208 468.500,211 472.500,213.800" stroke-width="2.800"/>
<path d="M461,210 C464.500,212.400 467.500,214.400 470,216" stroke-width="2.400"/>
<path d="M462.500,215 L467.500,218.700 M463.200,222 L466.200,221.300" stroke-width="2.100"/>
<path d="M461.00,226.30 C459.00,228.03 459.33,227.10 455.00,231.50 C450.67,235.90 452.50,233.83 448.00,239.50 C443.50,245.17 443.67,245.50 441.50,248.50" stroke-width="4.200"/>
<path d="M431.200,235 C433.500,233.800 436,234.200 437.600,235.700 M431.800,241.300 C434.300,239.400 437,238.800 439,239.300 M433.800,247 C434.800,244.500 436.300,242.500 437.800,241.300" stroke-width="2"/>
<path d="M568.750,194.400 C572.500,192.600 576.500,190.900 580,189.400" stroke-width="3.200"/>
<path d="M550,211 C554.500,208.300 559.500,205.700 563.750,203.750" stroke-width="3"/>
<path d="M552,213.800 C555.500,211.900 559,210.200 562.500,208.800" stroke-width="2.400"/>
<path d="M554.400,216.900 L561.200,213.800 M557.500,221.300 L561.200,220" stroke-width="2.100"/>
<path d="M558.75,221.00 C561.17,223.50 560.75,222.50 566.00,228.50 C571.25,234.50 569.00,232.03 574.50,239.00 C580.00,245.97 579.83,245.93 582.50,249.40" stroke-width="3.800"/>
<path d="M588,236.300 C591,238.200 593.500,240.200 595,242 M586.300,241.300 C589,243 591,244.500 592.500,245.500 M587.500,246.900 L588.800,247.500" stroke-width="2"/>
</g>
<g fill="none" stroke="#6e5c56" stroke-width="1.900" stroke-linecap="round"><path d="M478,273 C483,275 487,278.500 490,282.500"/><path d="M486,272 C489,274 491,276.500 492.500,279.500"/><path d="M532,279.500 C533,276 535,273 537.200,271"/><path d="M533.700,282.500 C537,278 542,274.500 547,272.500"/></g>
<path d="M456.90,293.30 C457.23,290.63 456.97,291.43 459.00,289.00 C461.03,286.57 460.00,287.50 463.00,286.00 C466.00,284.50 464.67,285.10 468.00,284.50 C471.33,283.90 469.67,283.97 473.00,284.20 C476.33,284.43 474.83,284.00 478.00,285.20 C481.17,286.40 479.83,285.53 482.50,287.80 C485.17,290.07 484.00,288.93 486.00,292.00 C488.00,295.07 487.77,294.17 488.50,297.00 C489.23,299.83 489.20,298.73 488.20,300.50 C487.20,302.27 487.57,300.90 485.50,302.30 C483.43,303.70 484.67,303.40 482.00,304.70 C479.33,306.00 480.67,305.53 477.50,306.20 C474.33,306.87 475.83,306.83 472.50,306.70 C469.17,306.57 470.50,306.87 467.50,305.80 C464.50,304.73 465.83,305.27 463.50,303.50 C461.17,301.73 462.33,302.67 460.50,300.50 C458.67,298.33 459.20,299.40 458.00,297.00 C456.80,294.60 456.57,295.97 456.90,293.30 Z" fill="#0b0a0a"/>
<path d="M535.00,299.20 C534.27,296.63 535.13,297.90 536.80,295.00 C538.47,292.10 537.60,293.17 540.00,290.50 C542.40,287.83 541.17,288.77 544.00,287.00 C546.83,285.23 545.33,286.00 548.50,285.20 C551.67,284.40 550.17,284.50 553.50,284.60 C556.83,284.70 555.40,284.53 558.50,285.50 C561.60,286.47 560.30,285.67 562.80,287.50 C565.30,289.33 564.50,288.50 566.00,291.00 C567.50,293.50 567.13,292.33 567.30,295.00 C567.47,297.67 567.77,296.50 566.50,299.00 C565.23,301.50 566.00,300.50 563.50,302.50 C561.00,304.50 562.33,303.67 559.00,305.00 C555.67,306.33 557.17,306.00 553.50,306.50 C549.83,307.00 551.50,307.00 548.00,306.50 C544.50,306.00 546.00,306.27 543.00,305.00 C540.00,303.73 541.67,304.63 539.00,302.70 C536.33,300.77 535.73,301.77 535.00,299.20 Z" fill="#0b0a0a"/>
<circle cx="479" cy="294" r="2.300" fill="#cfcaca"/><circle cx="467.400" cy="301.200" r="1.100" fill="#cfcaca"/><circle cx="556.200" cy="291.800" r="2.600" fill="#cfcaca"/><circle cx="546.200" cy="301.200" r="2" fill="#cfcaca"/>
<path d="M465,288.500 L471.500,295.500 M549.500,297.500 L554,292" stroke="#8f8a8a" stroke-width=".8" fill="none"/>
<path d="M498.20,335.40 C498.87,333.23 498.32,334.33 500.00,333.50 C501.68,332.67 499.25,333.17 503.25,332.90 C507.25,332.63 506.28,332.70 512.00,332.70 C517.72,332.70 516.23,332.63 520.40,332.90 C524.57,333.17 522.53,332.67 524.50,333.50 C526.47,334.33 525.63,333.23 526.30,335.40 C526.97,337.57 526.63,337.13 526.50,340.00 C526.37,342.87 526.33,341.67 525.90,344.00 C525.47,346.33 525.90,345.47 525.20,347.00 C524.50,348.53 524.87,348.17 523.80,348.60 C522.73,349.03 523.13,348.63 522.00,348.30 C520.87,347.97 521.13,347.20 520.40,347.60 C519.67,348.00 520.30,348.37 519.80,349.50 C519.30,350.63 519.90,350.07 518.90,351.00 C517.90,351.93 518.17,351.57 516.80,352.30 C515.43,353.03 515.63,352.30 514.80,353.20 C513.97,354.10 514.43,353.65 514.30,355.00 C514.17,356.35 513.50,356.15 514.40,357.25 C515.30,358.35 515.00,357.52 517.00,358.30 C519.00,359.08 518.47,358.70 520.40,359.60 C522.33,360.50 521.50,359.97 522.80,361.00 C524.10,362.03 523.67,361.43 524.30,362.70 C524.93,363.97 524.80,363.50 524.70,364.80 C524.60,366.10 525.57,365.83 524.00,366.60 C522.43,367.37 524.00,366.90 520.00,367.10 C516.00,367.30 517.33,367.20 512.00,367.20 C506.67,367.20 507.97,367.30 504.00,367.10 C500.03,366.90 501.67,367.37 500.10,366.60 C498.53,365.83 499.43,366.10 499.30,364.80 C499.17,363.50 499.07,363.97 499.70,362.70 C500.33,361.43 499.77,362.03 501.20,361.00 C502.63,359.97 501.90,360.50 504.00,359.60 C506.10,358.70 505.43,359.08 507.50,358.30 C509.57,357.52 509.30,358.35 510.20,357.25 C511.10,356.15 510.37,356.35 510.20,355.00 C510.03,353.65 510.53,354.10 509.70,353.20 C508.87,352.30 509.07,353.03 507.70,352.30 C506.33,351.57 506.63,351.93 505.60,351.00 C504.57,350.07 505.13,350.63 504.60,349.50 C504.07,348.37 504.70,348.00 504.00,347.60 C503.30,347.20 503.57,347.97 502.50,348.30 C501.43,348.63 501.83,349.03 500.80,348.60 C499.77,348.17 500.13,348.53 499.40,347.00 C498.67,345.47 499.07,346.33 498.60,344.00 C498.13,341.67 498.13,342.87 498.00,340.00 C497.87,337.13 497.53,337.57 498.20,335.40 Z" fill="#0a0505"/>
<path d="M482.300,354.300 C481.700,356.500 481.700,359.500 482.300,361.500 C483.300,363.200 486,363.500 490,363.500 C495,363.400 499,363.200 502,363.300 M541.900,354.300 C542.500,356.500 542.500,359.500 541.900,361.500 C540.900,363.200 538,363.500 534,363.500 C529,363.400 525,363.200 522,363.300" fill="none" stroke="#0a0505" stroke-width="3.500" stroke-linecap="round" stroke-linejoin="round"/>
</g>
<g id="crosshair" fill="none" stroke="#472c1f" stroke-opacity=".7"><circle cx="583.750" cy="247.750" r="31" stroke-width="3.500"/><path d="M583.750,216 V279.500 M552,247.750 H615.500" stroke-width="1.100"/></g>
<g id="toolbar-icons" fill="none" stroke="#636266" stroke-width="1.100" stroke-linecap="round" stroke-linejoin="round">
  <!-- list -->
  <rect x="242.500" y="10.500" width="13" height="10.500" rx="1.500" stroke="#8a898d"/>
  <path d="M247.500,13.500 H253 M247.500,16 H253 M247.500,18.500 H253" stroke="#8a898d" stroke-width=".9"/>
  <path d="M244.800,13.500 h.8 M244.800,16 h.8 M244.800,18.500 h.8" stroke="#8a898d" stroke-width=".9"/>
  <!-- undo -->
  <path d="M271.800,16.300 L279.200,11.300 V13.900 C284,14.100 288,13.600 291,12 C290,16.500 285.800,19 279.200,18.800 V21.400 Z" fill="#56555a" stroke="none"/>
  <!-- redo -->
  <path d="M329.500,16.300 L322.100,21.300 V18.700 C317.300,18.500 313.300,19 310.300,20.600 C311.300,16.100 315.500,13.600 322.100,13.800 V11.200 Z" fill="#b3b2b6" stroke="none"/>
  <!-- select -->
  <path d="M359.500,11.500 H371.500 V20.500 H359.500 Z" stroke-dasharray="1.800 1.500" stroke="#6a696d" stroke-width="1.200" stroke-linecap="butt"/>
  <path d="M367.600,16.300 L374.200,19.800 L371.500,20.600 L372.800,23 L371.400,23.600 L370.200,21.200 L368.200,22.900 Z" fill="#3a393d" stroke="none"/>
  <!-- move -->
  <path d="M402.300,11 V15 M402.300,18.400 V22.400 M396.500,16.700 H400.600 M404,16.700 H408.100" stroke="#4a494d" stroke-width="1"/><circle cx="402.300" cy="16.700" r=".8" fill="#4a494d" stroke="none"/>
  <path d="M402.300,9.300 L404.200,11.800 H400.400 Z M402.300,24 L404.200,21.500 H400.400 Z M395,16.700 L397.500,14.800 V18.600 Z M409.600,16.700 L407.100,14.800 V18.600 Z" fill="#3e3d41" stroke="none"/>
  <!-- bucket -->
  <ellipse cx="439.500" cy="11" rx="5.600" ry="1.700" stroke="#77767a"/>
  <path d="M433.900,11 V21.500 C434,23 436.500,24 439.500,24 C442.500,24 445,23 445.100,21.500 V11" stroke="#77767a"/>
  <path d="M434,19.500 C437,18.200 441,21 445,19.800 V21.500 C445,23 442.500,24 439.500,24 C436.500,24 434,23 434,21.500 Z" fill="#77767a" stroke="none"/>
  <path d="M434,13.500 C431.500,14 431.800,18.500 434.500,19.500" stroke="#77767a"/>
  <!-- ruler -->
  <path d="M469,21.200 L480.500,10 L483.300,12.800 L471.800,24 Z" stroke="#56555a" stroke-width="1.200" fill="#fbfbfc"/>
  <circle cx="476.200" cy="17" r="6.600" stroke="#a3a2a6" stroke-width=".8" stroke-dasharray="1.500 1.500"/>
  <!-- symmetry -->
  <path d="M507.300,10.900 C504.500,10.700 503.600,12.500 505,14 C507,15.600 509.400,15.600 509.400,17 C509.400,18.400 507,18.400 505,20 C503.600,21.500 504.500,22.600 507.300,22.300 M516.700,10.900 C519.500,10.700 520.400,12.500 519,14 C517,15.600 514.600,15.600 514.600,17 C514.600,18.400 517,18.400 519,20 C520.400,21.500 519.500,22.600 516.700,22.300" stroke="#5a595d" stroke-width="1.200"/>
  <path d="M512,10 V24" stroke="#aaa9ad" stroke-width=".8" stroke-dasharray="1.600 1.600"/>
  <!-- shapes -->
  <circle cx="550.500" cy="15" r="4.700" stroke="#5a595d"/>
  <rect x="541.800" y="15.200" width="9" height="8.500" stroke="#5a595d"/>
  <!-- curve -->
  <path d="M579.500,22.300 C587,21.500 584,12 591.500,11.300 C587,13.500 588,21.500 579.500,22.300 Z" fill="#5a595d" stroke="#5a595d" stroke-width=".8"/>
  <!-- image + -->
  <path d="M614.800,14.500 V22.800 H629 V17" stroke="#5a595d" stroke-width="1"/>
  <path d="M614.800,13 H623" stroke="#5a595d" stroke-width="1"/>
  <path d="M615,22.800 L619.500,17 L622.500,20.500 L625,18.300 L629,22.800 Z" fill="#4a494d" stroke="none"/>
  <path d="M626.700,10.500 V16 M624,13.200 H629.500" stroke="#4a494d" stroke-width="1.100"/>
  <!-- perspective grid -->
  <path d="M658.500,9.600 V24.300 M658.500,9.600 L650.500,14 V21.500 L658.500,24.300 L666.800,21.500 V14 Z M654.500,11.800 V22.900 M662.700,11.800 V22.900 M650.500,16.500 L658.500,15.200 L666.800,16.500 M650.500,19 L658.500,19.700 L666.800,19" stroke="#6a696d" stroke-width=".85"/>
  <!-- video -->
  <rect x="722.800" y="12.300" width="11.300" height="8.800" rx="1" fill="#55545a" stroke="none"/>
  <circle cx="725.500" cy="14.800" r="1.200" fill="#f4f3f5" stroke="none"/>
  <path d="M736.500,15 L739.800,13 V20.500 L736.500,18.500 Z" stroke="#8a898d" stroke-width=".9"/>
  <!-- fullscreen -->
  <path d="M768.500,11.500 H782.500 V21.500 H768.500 Z" fill="#fdfdfd" stroke="#8a898d" stroke-width="1.200"/>
  <path d="M769,11.500 C773,12.800 778,12.800 782,11.500" stroke="#8a898d" stroke-width=".8"/>
</g>
<text x="695.300" y="23.700" font-family="'Liberation Serif',serif" font-size="21" text-anchor="middle" fill="#5a595d">T</text>

<g id="pilltip">
  <path d="M810.600,83 H811.900 L812.300,87.500 C813.800,89.500 815.300,91.500 816,94 C816.800,97 817.300,101 817.500,105.600 H805 C805.200,101 805.700,97 806.500,94 C807.200,91.500 808.700,89.500 810.200,87.500 Z" fill="url(#steel)"/>
  <path d="M805,103 H817.500 V105.700 H805 Z" fill="#6f675b"/>
  <path d="M808.700,91 L808,96 M813.800,91 L814.500,96" stroke="#6d6b71" stroke-width=".5" fill="none"/>
</g>
<g id="mascot">
  <!-- cap -->
  <path d="M80,457 L109.700,446 L113.500,451 L113.500,462 L100,470 L92,484 L89,492.500 L83,485.500 L75.700,488.500 L72.200,485.500 Z" fill="#2c2a2b"/>
  <path d="M84.700,462.600 L111.500,452.600 M84.700,462.600 L77.500,487" stroke="#8d8c8e" stroke-width="1.600" fill="none"/>
  <path d="M75.700,493.200 L60.500,498.200" stroke="#2c2a2b" stroke-width="2.200" stroke-linecap="round"/>
  <circle cx="74.600" cy="493.300" r="2.600" fill="#2c2a2b"/>
  <path d="M62,495.300 L58.200,496.300 L59.800,501.200 L63.300,499.600 Z" fill="#2c2a2b"/>
  <!-- shadow foot -->
  <path d="M97,554 C103,562 112,564.500 120,563.500 C127,562.500 131,559 132.500,555 Z" fill="#51c6bf"/>
  <!-- body -->
  <path d="M128.500,460.400 C138,460.200 146,462 151,466 C157,471 161.500,479 163.500,487 C165,492 165.500,496 166.500,498.400
           C170,495.500 175,493.500 179.500,494.800 C183.500,496.500 185.500,501 185.600,507 C185.500,515 182,522 177,527 C174,530 171,531.500 169,533
           C167,539 164.500,545 161.500,550 C159,555.500 156.500,560 152,563.500 C148.500,566 144,566.500 140.500,564 C136,561 132.500,557 128.500,551.600
           C124,553.500 119,555 114,556 C108,557.200 102,557.500 97,555.500 C90,553 83.500,547.500 80.800,542 C79.500,538.500 80,534.500 81.700,531.300
           C77.500,531 73.500,529 70.500,526 C67.500,523 67,519.500 69,516.500 C72,513 77.500,510.500 83,508.500 C85.500,507.700 87.500,506.800 89.300,506
           C88,502 87.500,498 88.200,494 C89.500,486 93.500,477 99,471 C105,464.500 115,461 128.500,460.400 Z" fill="#80f5ea" stroke="#2fb0a8" stroke-width="1.200" stroke-linejoin="round"/>
  <path d="M89.300,506 C88.500,510 86,513.500 82,516" fill="none" stroke="#2fb0a8" stroke-width="1.100" stroke-linecap="round"/>
  <path d="M81.700,531.300 C85,531.500 88,531 90.500,529.500" fill="none" stroke="#2fb0a8" stroke-width="1.100" stroke-linecap="round"/>
  <!-- eye -->
  <ellipse cx="133.600" cy="487" rx="15.300" ry="15" fill="#fdfefe"/>
  <path d="M133.80,477.46 L136.60,483.62 L142.98,484.29 L138.17,488.66 L139.62,495.04 L133.80,491.68 L127.98,495.04 L129.43,488.66 L124.62,484.29 L131.00,483.62 Z" fill="#272526" stroke="#272526" stroke-width="3.400" stroke-linejoin="round"/>
  <!-- smile -->
  <path d="M118.800,503.800 C123,506.500 130,507.800 137,507.200 C144,506.500 150.500,504 154.800,500.800 C153.500,507 148,512 139.500,513.300 C130,514.500 122,511 118.800,503.800 Z" fill="#fdfefe" stroke="#fdfefe" stroke-width="1.600" stroke-linejoin="round"/>
  <!-- pointer -->
  <path d="M173.300,466 H178.800 L175.400,515.500 C175.100,517.800 173.700,517.800 173.500,515.500 Z" fill="#262425"/>
  <circle cx="176.900" cy="457.800" r="9.800" fill="#fdfdfd" stroke="#1d1b1c" stroke-width="2.300"/>
  <path d="M171.600,450.500 C170.800,445 172,439 174.300,436.300 C175.500,435 177,435.500 177.600,437.500 C178.500,441 177.500,446 175.500,449 C174,451 172.300,451 171.700,450 C172.500,454 175.500,457 179.500,456" fill="none" stroke="#1d1b1c" stroke-width="2" stroke-linecap="round" stroke-linejoin="round"/>
</g>
<g id="capbox">
  <path d="M222,504.300 H921.500 a6,6 0 0 1 6,6 V559 a6,6 0 0 1 -6,6 H222 a6,6 0 0 1 -6,-6 V550 L186.500,533.700 L216,520.500 V510.300 a6,6 0 0 1 6,-6 Z" fill="#62e9f1" stroke="#a8eef4" stroke-width=".8"/>
  <path d="M224.500,509 H919.500 a3,3 0 0 1 3,3 V557 a3,3 0 0 1 -3,3 H224.500 a3,3 0 0 1 -3,-3 V546.300 L195,533.700 L221.500,524.800 V512 a3,3 0 0 1 3,-3 Z" fill="#fefefe"/>
</g>

</svg><!--/ART-->
  <div id="captext">こんなふうにいろんな<span class="k">犬<span class="r">いぬ</span></span>が<span class="k" style="margin-left:1.500px">描<span class="r">か</span></span>けるよ！</div>
</div>
</body>
</html>
